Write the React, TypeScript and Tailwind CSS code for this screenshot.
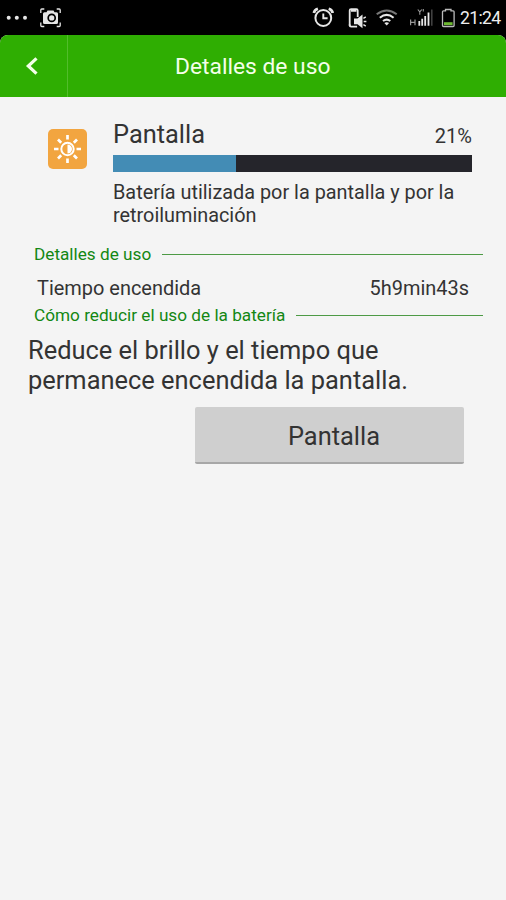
import type { ReactNode } from "react";

function StatusBar() {
  return (
    <div className="flex h-[35px] items-start bg-black text-[#e6e6e6]">
      <svg className="h-[35px] w-[70px]" viewBox="0 0 70 35" fill="currentColor">
        <circle cx="8.7" cy="17.8" r="2" />
        <circle cx="16.8" cy="17.8" r="2" />
        <circle cx="25" cy="17.8" r="2" />
        <path d="M44.5 12.2h2l1-1.7h6l1 1.7h2q1.500 0 1.500 1.500v8.800q0 1.500-1.500 1.500h-12q-1.500 0-1.500-1.500v-8.800q0-1.500 1.500-1.500z" />
        <circle cx="51.700" cy="17.900" r="3.500" fill="none" stroke="#000" strokeWidth="1.700" />
        <path d="M40.800 13v-3q0-1 1-1h2.500M56.700 9h2.500q1 0 1 1v3M60.200 22.500v3q0 1-1 1h-2.500M44.300 26.500h-2.500q-1 0-1-1v-3" fill="none" stroke="currentColor" strokeWidth="1.300" />
      </svg>
      <div className="flex-1" />
      <svg className="h-[35px] w-[156px]" viewBox="304 0 156 35" fill="none" stroke="currentColor">
        <circle cx="323.300" cy="18" r="7.900" strokeWidth="2" />
        <path d="M323.300 13.500v4.800h4.300" strokeWidth="1.900" />
        <path d="M313.900 13q.4-3.200 4-4.300M332.700 13q-.4-3.200-4-4.300" strokeWidth="2.700" />
        <path d="M349.700 25.800V10.500q0-1.400 1.400-1.400h5.200q1.400 0 1.400 1.400v6.500" strokeWidth="1.800" />
        <path d="M349.700 24.500v.7q0 1.400 1.400 1.400h6" strokeWidth="1.900" />
        <path d="M351 10.500h5.500" strokeWidth="2.500" />
        <path d="M354 18.500h3.500l5-3.900v13.600l-5-4h-3.500z" fill="currentColor" stroke="none" />
        <path d="M363.400 18.300l2.400-1.400M363.700 21.500h2.700M363.400 24.700l2.400 1.400" strokeWidth="1.500" />
        <path d="M376.700 14.300q10-7.800 20 0" stroke="#777" strokeWidth="1.900" />
        <path d="M379.800 17.700q6.900-5.500 13.800 0M383 21q3.700-2.800 7.300 0" strokeWidth="2.100" />
        <path d="M384.300 22.900q2.400-1.500 4.800 0l-2.400 2.500z" fill="currentColor" stroke="none" />
        <path d="M410.600 19.500v5.800M415 19.500v5.800M410.600 22.400h4.400" stroke="#999" strokeWidth="1.200" />
        <path d="M417.800 9.500l2 2.300 2-2.300M419.800 11.500v3.300M423.300 9v2.500" stroke="#999" strokeWidth="1.100" />
        <path d="M419.300 21v4.700M422.200 18.800v6.900M425.200 16v9.700M428.500 12.500v13.200" strokeWidth="1.800" />
        <path d="M431.800 9.500v16.200" stroke="#444" strokeWidth="1.500" />
        <path d="M445.500 10.800V9.500h5.500v1.300h2.100q1 0 1 1v13.700q0 1-1 1h-9.600q-1 0-1-1V11.800q0-1 1-1z" stroke="#bbb" strokeWidth="1.300" />
        <path d="M444 22.200h8.600v2.900H444z" fill="#6fba32" stroke="none" />
      </svg>
      <div className="w-[46px] whitespace-nowrap pt-px text-[17.700px] leading-[35px] tracking-[-0.700px] text-[#eee]">21:24</div>
    </div>
  );
}

function SectionHeading({ children }: { children: ReactNode }) {
  return (
    <div className="flex h-5 items-center pl-[34px] pr-[23px]">
      <h2 className="whitespace-nowrap text-[17.200px] leading-5 text-[#138713]">{children}</h2>
      <div className="ml-[11px] h-px flex-1 bg-[#4d9a45]" />
    </div>
  );
}

export default function App() {
  return (
    <div className="h-[900px] w-[506px] overflow-hidden bg-black font-['Roboto',sans-serif] text-[#333]">
      <StatusBar />
      <div className="h-[865px] overflow-hidden rounded-t-[8px] bg-[#f4f4f4]">
        <header className="flex h-[62px] bg-[#2fae02] text-[#f4ffe9]">
          <button className="flex w-[68px] items-center border-r border-[#52bd2c] pl-[25px]" aria-label="Atrás">
            <svg className="h-5 w-[14px]" viewBox="0 0 14 20" fill="none" stroke="currentColor" strokeWidth="3.200">
              <path d="M11.500 2.300L3.300 10l8.200 7.700" />
            </svg>
          </button>
          <h1 className="flex-1 pl-[107px] text-[22.800px] leading-[64px]">Detalles de uso</h1>
        </header>
        <main>
          <section className="flex pl-12 pr-[34px] pt-[22px]">
            <svg className="mt-[10px] h-10 w-[39px]" viewBox="0 0 39 40" fill="none" stroke="#fff">
              <rect width="39" height="40" rx="5" fill="#f2a540" stroke="none" />
              <circle cx="19.500" cy="20" r="6.200" strokeWidth="2" />
              <path d="M19.500 15.500a4.500 4.500 0 0 1 0 9z" fill="#fff" stroke="none" />
              <path d="M19.500 6v4.500M19.500 29.500V34M6 20h4.500M28.500 20H33M10 10.500l3.200 3.200M25.800 26.300l3.200 3.200M10 29.500l3.200-3.200M25.800 13.700l3.200-3.200" strokeWidth="2.700" />
            </svg>
            <div className="ml-[26px] flex-1">
              <div className="flex h-9 items-baseline justify-between">
                <div className="text-[25.400px] leading-[30px]">Pantalla</div>
                <div className="text-[20px] leading-[30px]">21%</div>
              </div>
              <div className="h-[17px] bg-[#25252b]">
                <div className="h-full w-[123px] bg-[#438cb5]" />
              </div>
              <p className="mt-[9px] whitespace-nowrap text-[19.850px] leading-[23px]">
                Batería utilizada por la pantalla y por la<br />retroiluminación
              </p>
            </div>
          </section>
          <section className="pt-[17px]">
            <SectionHeading>Detalles de uso</SectionHeading>
            <div className="flex h-[41px] justify-between px-[37px] text-[19.950px] leading-[49px]">
              <div>Tiempo encendida</div>
              <div>5h9min43s</div>
            </div>
            <SectionHeading>Cómo reducir el uso de la batería</SectionHeading>
          </section>
          <p className="pl-[28px] pt-[11px] text-[25.430px] leading-[29.500px]">
            Reduce el brillo y el tiempo que<br />permanece encendida la pantalla.
          </p>
          <button className="ml-[195px] mt-[12px] block h-[57px] w-[269px] rounded-[2px] border-b-2 border-[#a7a7a7] bg-[#cfcfcf] pl-[9px] pt-[3px] text-center text-[25.430px] leading-[52px]">
            Pantalla
          </button>
        </main>
      </div>
    </div>
  );
}
